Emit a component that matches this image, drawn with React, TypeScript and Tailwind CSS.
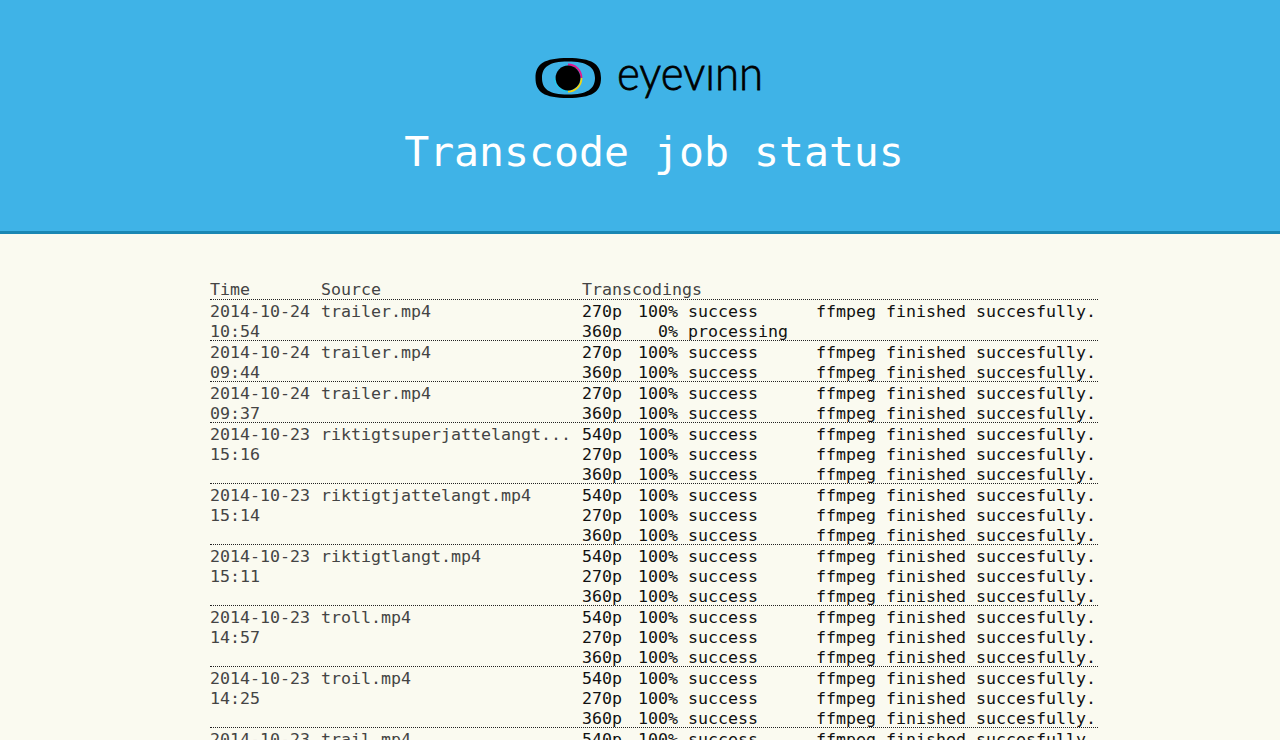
const ok = 'ffmpeg finished succesfully.'

type Row = { p: string; pct: string; status: string; msg: string }

const trio: Row[] = [
  { p: '540p', pct: '100%', status: 'success', msg: ok },
  { p: '270p', pct: '100%', status: 'success', msg: ok },
  { p: '360p', pct: '100%', status: 'success', msg: ok },
]
const duo: Row[] = trio.slice(1)

const jobs = [
  {
    date: '2014-10-24',
    time: '10:54',
    source: 'trailer.mp4',
    rows: [
      { p: '270p', pct: '100%', status: 'success', msg: ok },
      { p: '360p', pct: '0%', status: 'processing', msg: '' },
    ],
  },
  { date: '2014-10-24', time: '09:44', source: 'trailer.mp4', rows: duo },
  { date: '2014-10-24', time: '09:37', source: 'trailer.mp4', rows: duo },
  { date: '2014-10-23', time: '15:16', source: 'riktigtsuperjattelangt...', rows: trio },
  { date: '2014-10-23', time: '15:14', source: 'riktigtjattelangt.mp4', rows: trio },
  { date: '2014-10-23', time: '15:11', source: 'riktigtlangt.mp4', rows: trio },
  { date: '2014-10-23', time: '14:57', source: 'troll.mp4', rows: trio },
  { date: '2014-10-23', time: '14:25', source: 'troil.mp4', rows: trio },
  { date: '2014-10-23', time: '14:20', source: 'trail.mp4', rows: trio },
]

function Logo() {
  return (
    <svg width="242" height="48" viewBox="0 0 242 48" aria-label="eyevinn">
      <path
        fillRule="evenodd"
        d="M35 4 C59 4 68 10 68 24 C68 38 59 44 35 44 C11 44 2.5 38 2.5 24 C2.5 10 11 4 35 4 Z M35 7.5 C54 7.5 62 13 62 24 C62 35 54 40.5 35 40.5 C16 40.5 9 35 9 24 C9 13 16 7.5 35 7.5 Z"
        fill="#000"
      />
      <path d="M35 10.5 A13.5 13.5 0 0 1 48.5 24" fill="none" stroke="#e6178c" strokeWidth="1.8" />
      <path d="M48.5 24 A13.5 13.5 0 0 1 35 37.5" fill="none" stroke="#f5d60f" strokeWidth="1.8" />
      <path d="M35 37.5 A13.5 13.5 0 0 1 21.5 24" fill="none" stroke="#15d6f0" strokeWidth="1" />
      <circle cx="35" cy="24" r="12.4" fill="#000" />
      <text
        x="84"
        y="35.5"
        fontFamily="Lato, sans-serif"
        fontWeight="300"
        fontSize="48"
        fill="#000"
        stroke="#000"
        strokeWidth="0.8"
        textLength="146"
        lengthAdjust="spacingAndGlyphs"
      >
        eyevınn
      </text>
    </svg>
  )
}

export default function App() {
  return (
    <div className="h-[740px] overflow-hidden bg-[#fafaf0] font-['DejaVu_Sans_Mono',monospace] text-[16.61px] leading-5">
      <header className="h-[234px] border-b-[3px] border-[#1a87b3] bg-[#3fb3e7] pt-[54px] pl-[28px] text-center text-white">
        <div className="flex justify-center">
          <Logo />
        </div>
        <h1 className="mt-[19px] text-[41.5px] leading-[62px] font-normal">Transcode job status</h1>
      </header>

      <main className="mt-[46px] ml-[210px] w-[888px] text-[#444]">
        <div className="flex h-5 border-b border-dotted border-[#222]">
          <div className="w-[111px]">Time</div>
          <div className="w-[261px]">Source</div>
          <div>Transcodings</div>
        </div>
        {jobs.map((job, i) => (
          <div key={i} className="flex border-b border-dotted border-[#222] leading-[24px]">
            <div className="w-[111px]">
              <div className="h-5">{job.date}</div>
              <div className="h-5">{job.time}</div>
            </div>
            <div className="w-[261px]">{job.source}</div>
            <div className="text-[#111]">
              {job.rows.map((r) => (
                <div key={r.p} className="grid h-5 grid-cols-[50px_46px_138px_280px]">
                  <span>{r.p}</span>
                  <span className="text-right">{r.pct}</span>
                  <span className="pl-[10px]">{r.status}</span>
                  <span>{r.msg}</span>
                </div>
              ))}
            </div>
          </div>
        ))}
      </main>
    </div>
  )
}
